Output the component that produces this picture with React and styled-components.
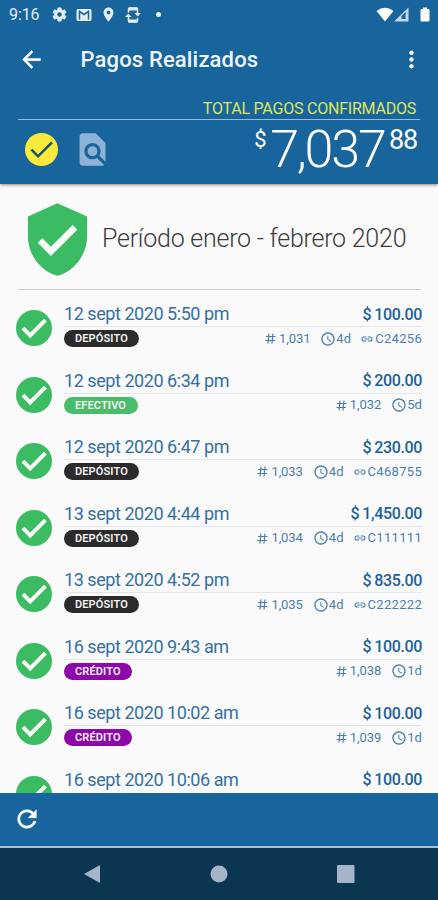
import React from "react";
import styled, { createGlobalStyle } from "styled-components";

const Global = createGlobalStyle`
  * { box-sizing: border-box; }
  body { margin: 0; background: #fafafa; font-family: Roboto, "Noto Sans", sans-serif; }
`;

const Screen = styled.div`
  width: 438px;
  height: 900px;
  display: flex;
  flex-direction: column;
  overflow: hidden;
  background: #fafafa;
`;
const Header = styled.header`
  height: 184px;
  flex: none;
  display: flex;
  flex-direction: column;
  background: #17659c;
  box-shadow: 0 1px 3px rgba(0, 0, 0, 0.45);
  color: #fff;
  z-index: 1;
`;
const StatusBar = styled.div`
  height: 29px;
  display: flex;
  align-items: center;
  padding: 0 8px 0 9px;
  color: #e3edf8;
`;
const Time = styled.span`
  width: 42px;
  font-size: 16px;
  line-height: 28px;
  letter-spacing: -0.1px;
`;
const StatusIcons = styled.div`
  display: flex;
  align-items: center;
  gap: 7px;
  flex: 1;
`;
const Dot = styled.i`
  width: 5px;
  height: 5px;
  margin-left: 7px;
  border-radius: 50%;
  background: #eef5fc;
`;
const Signals = styled.div`
  display: flex;
  align-items: center;
  color: #fff;
`;
const Toolbar = styled.div`
  height: 60px;
  display: flex;
  align-items: center;
  padding: 0 13px 0 18px;
`;
const Title = styled.h1`
  flex: 1;
  margin: 0 0 0 35.5px;
  font-size: 22px;
  line-height: 30px;
  padding-top: 2px;
  font-weight: 500;
  letter-spacing: 0.15px;
  color: #eff5fc;
`;
const Summary = styled.section`
  margin: 0 18px;
`;
const SummaryLabel = styled.div`
  height: 31px;
  padding: 10px 4px 0 0;
  border-bottom: 1.5px solid #9dbad4;
  font-size: 16px;
  line-height: 19px;
  letter-spacing: -0.22px;
  text-align: right;
  color: #dfe75a;
`;
const SummaryRow = styled.div`
  display: flex;
  justify-content: space-between;
  align-items: flex-start;
  padding: 10px 3px 0 7px;
`;
const Actions = styled.div`
  display: flex;
  align-items: center;
  gap: 15px;
`;
const Total = styled.div`
  display: flex;
  align-items: flex-start;
  line-height: 1;
`;
const Small = styled.span`
  font-size: ${(p) => p.$size}px;
  line-height: ${(p) => p.$line}px;
  margin-left: ${(p) => p.$gap || 0}px;
  letter-spacing: ${(p) => p.$track || 0}px;
`;
const Whole = styled.span`
  margin-left: 3.5px;
  font-size: 52px;
  line-height: 39px;
  font-weight: 300;
  letter-spacing: -2.2px;
`;
const Content = styled.main`
  flex: 1;
  min-height: 0;
  overflow: hidden;
`;
const Period = styled.div`
  height: 106px;
  margin: 0 17px 0 18px;
  padding-top: 5px;
  display: flex;
  align-items: center;
  border-bottom: 1.5px solid #cfcfcf;
  font-size: 25px;
  font-weight: 300;
  color: #3c3c3c;
`;
const PeriodText = styled.span`
  margin-left: 5px;
  white-space: nowrap;
  line-height: 30px;
  letter-spacing: -0.24px;
`;
const List = styled.ul`
  margin: 0;
  padding: 12px 16px 0;
  list-style: none;
`;
const Row = styled.li`
  height: 66.57px;
  display: flex;
`;
const RowIcon = styled.div`
  width: 48px;
  padding-top: 8px;
  flex: none;
`;
const RowBody = styled.div`
  flex: 1;
`;
const Line = styled.div`
  display: flex;
  justify-content: space-between;
  align-items: center;
`;
const TopLine = styled(Line)`
  height: 25px;
  border-bottom: 1px solid ${(p) => (p.$last ? "transparent" : "#e4e6e8")};
`;
const BottomLine = styled(Line)`
  height: 23px;
`;
const DateText = styled.span`
  font-size: 18px;
  line-height: 24px;
  letter-spacing: -0.45px;
  color: #3570a5;
`;
const Amount = styled.span`
  display: flex;
  gap: 3px;
  font-size: 16px;
  line-height: 23px;
  font-weight: 500;
  letter-spacing: -0.35px;
  color: #1b629c;
`;
const tones = { DEPÓSITO: "#2b2b2b", EFECTIVO: "#49bd69", CRÉDITO: "#8c08a8" };
const Badge = styled.span`
  height: 17px;
  padding: 0 11.5px 0 11px;
  border-radius: 9px;
  background: ${(p) => tones[p.$kind]};
  font-size: 11px;
  line-height: 17px;
  font-weight: 600;
  letter-spacing: 0.12px;
  color: #f4f4f4;
`;
const Details = styled.div`
  display: flex;
  align-items: center;
  gap: 10px;
  font-size: 13px;
  color: #4a7fb0;
`;
const Detail = styled.span`
  display: flex;
  align-items: center;
  gap: ${(p) => p.$gap || 0}px;
  line-height: 16px;
  letter-spacing: ${(p) => p.$track || 0}px;
`;
const BottomBar = styled.footer`
  height: 55px;
  flex: none;
  display: flex;
  align-items: center;
  padding: 0 0 2px 13px;
  background: #17659c;
  border-bottom: 2px solid #b3bdc5;
  color: #fff;
`;
const NavBar = styled.nav`
  height: 52px;
  flex: none;
  display: flex;
  align-items: center;
  justify-content: space-between;
  padding: 0 82px 0 83px;
  background: #0a3652;
  color: #a3b5c6;
`;
const Svg = styled.svg`
  display: block;
  flex: none;
  fill: currentColor;
`;

const paths = {
  back: "M20 11H7.83l5.59-5.59L12 4l-8 8 8 8 1.41-1.41L7.83 13H20v-2z",
  more: "M12 8c1.1 0 2-.9 2-2s-.9-2-2-2-2 .9-2 2 .9 2 2 2zm0 2c-1.1 0-2 .9-2 2s.9 2 2 2 2-.9 2-2-.9-2-2-2zm0 6c-1.1 0-2 .9-2 2s.9 2 2 2 2-.9 2-2-.9-2-2-2z",
  gear: "M19.14 12.94c.04-.3.06-.61.06-.94 0-.32-.02-.64-.07-.94l2.03-1.58c.18-.14.23-.41.12-.61l-1.92-3.32c-.12-.22-.37-.29-.59-.22l-2.39.96c-.5-.38-1.03-.7-1.62-.94L14.4 2.81c-.04-.24-.24-.41-.48-.41h-3.84c-.24 0-.43.17-.47.41L9.25 5.35c-.59.24-1.13.57-1.62.94l-2.39-.96c-.22-.08-.47 0-.59.22L2.74 8.87c-.12.21-.08.47.12.61l2.03 1.58c-.05.3-.09.63-.09.94s.02.64.07.94l-2.03 1.58c-.18.14-.23.41-.12.61l1.92 3.32c.12.22.37.29.59.22l2.39-.96c.5.38 1.03.7 1.62.94l.36 2.54c.05.24.24.41.48.41h3.84c.24 0 .44-.17.47-.41l.36-2.54c.59-.24 1.13-.56 1.62-.94l2.39.96c.22.08.47 0 .59-.22l1.92-3.32c.12-.22.07-.47-.12-.61l-2.01-1.58zM12 15.6c-1.98 0-3.6-1.62-3.6-3.6s1.62-3.6 3.6-3.6 3.6 1.62 3.6 3.6-1.62 3.6-3.6 3.6z",
  mail: "M20 4H4c-1.1 0-2 .9-2 2v12c0 1.1.9 2 2 2h16c1.1 0 2-.9 2-2V6c0-1.1-.9-2-2-2zm-1 14h-2V9.2l-5 3.5-5-3.5V18H5V6h1.2L12 10l5.8-4H19z",
  place: "M12 2C8.13 2 5 5.13 5 9c0 5.25 7 13 7 13s7-7.75 7-13c0-3.87-3.13-7-7-7zm0 9.5c-1.38 0-2.5-1.12-2.5-2.5s1.12-2.5 2.5-2.5 2.5 1.12 2.5 2.5-1.12 2.5-2.5 2.5z",
  find: "M20 19.59V8l-6-6H6c-1.1 0-1.99.9-1.99 2L4 20c0 1.1.89 2 1.99 2H18c.45 0 .85-.15 1.19-.4l-4.43-4.43c-.8.52-1.74.83-2.76.83-2.76 0-5-2.24-5-5s2.24-5 5-5 5 2.24 5 5c0 1.02-.31 1.96-.83 2.75L20 19.59zM9 13c0 1.66 1.34 3 3 3s3-1.34 3-3-1.34-3-3-3-3 1.34-3 3z",
  shield: "M12 1L3 5v6c0 5.55 3.84 10.74 9 12 5.16-1.26 9-6.45 9-12V5l-9-4zm-2 16l-4-4 1.41-1.41L10 14.17l6.59-6.59L18 9l-8 8z",
  clock: "M11.99 2C6.47 2 2 6.48 2 12s4.47 10 9.99 10C17.52 22 22 17.52 22 12S17.52 2 11.99 2zM12 20c-4.42 0-8-3.58-8-8s3.58-8 8-8 8 3.58 8 8-3.58 8-8 8zm.5-13H11v6l5.25 3.15.75-1.23-4.5-2.67z",
  refresh: "M17.65 6.35C16.2 4.9 14.21 4 12 4c-4.42 0-7.99 3.58-7.99 8s3.57 8 7.99 8c3.73 0 6.84-2.55 7.73-6h-2.08c-.82 2.33-3.04 4-5.65 4-3.31 0-6-2.69-6-6s2.69-6 6-6c1.66 0 3.14.69 4.22 1.78L13 11h7V4l-2.35 2.35z",
};

const Icon = ({ name, size, color, weight = 0 }) => (
  <Svg width={size} height={size} viewBox="0 0 24 24" color={color}>
    <path d={paths[name]} stroke="currentColor" strokeWidth={weight} />
  </Svg>
);

const CheckCircle = ({ size, fill, stroke, width }) => (
  <Svg width={size} height={size} viewBox="0 0 36 36">
    <circle cx="18" cy="18" r="18" fill={fill} />
    <path d="M7 18.2L14.2 25.4L29.4 10.2" fill="none" stroke={stroke} strokeWidth={width} />
  </Svg>
);

const Hash = () => (
  <Svg width="11" height="11" viewBox="0 0 11 11">
    <path d="M4 .5L3 10.5M8 .5L7 10.5M1 3.5H10.5M.5 7.5H10" fill="none" stroke="currentColor" strokeWidth="1.2" />
  </Svg>
);

const Chain = () => (
  <Svg width="12" height="8" viewBox="0 0 12 8">
    <path d="M5.2 2H3a2 2 0 0 0 0 4H5.2M6.8 2H9a2 2 0 0 1 0 4H6.8M3.5 4H8.5" fill="none" stroke="currentColor" strokeWidth="1.1" />
  </Svg>
);

const PhoneSync = () => (
  <Svg width="18" height="18" viewBox="0 0 18 18">
    <path d="M4.5 6.500V3.500Q4.500 2 6 2h6Q13.500 2 13.500 3.500V7M4.500 11v3.500Q4.500 16 6 16h6q1.500 0 1.500-1.500V12" fill="none" stroke="currentColor" strokeWidth="1.6" />
    <path d="M10.500 7h6.500L13.700 10.500zM1 11h6.500L4.300 7.500zM4.500 1.500h9v3h-9zM4.500 13.500h9v3h-9z" />
  </Svg>
);

const payments = [
  ["12 sept 2020 5:50 pm", "100.00", "DEPÓSITO", "1,031", "4d", "C24256"],
  ["12 sept 2020 6:34 pm", "200.00", "EFECTIVO", "1,032", "5d"],
  ["12 sept 2020 6:47 pm", "230.00", "DEPÓSITO", "1,033", "4d", "C468755"],
  ["13 sept 2020 4:44 pm", "1,450.00", "DEPÓSITO", "1,034", "4d", "C111111"],
  ["13 sept 2020 4:52 pm", "835.00", "DEPÓSITO", "1,035", "4d", "C222222"],
  ["16 sept 2020 9:43 am", "100.00", "CRÉDITO", "1,038", "1d"],
  ["16 sept 2020 10:02 am", "100.00", "CRÉDITO", "1,039", "1d"],
  ["16 sept 2020 10:06 am", "100.00"],
];

const Payment = ({ data: [date, amount, kind, number, age, reference] }) => (
  <Row>
    <RowIcon>
      <CheckCircle size={36} fill="#3cbc62" stroke="#fafafa" width={4} />
    </RowIcon>
    <RowBody>
      <TopLine $last={!kind}>
        <DateText>{date}</DateText>
        <Amount><span>$</span><span>{amount}</span></Amount>
      </TopLine>
      {kind && (
        <BottomLine>
          <Badge $kind={kind}>{kind}</Badge>
          <Details>
            <Detail $gap={3} $track={-0.1}><Hash />{number}</Detail>
            <Detail $track={0.1}><Icon name="clock" size={16} />{age}</Detail>
            {reference && <Detail $gap={2} $track={0.3}><Chain />{reference}</Detail>}
          </Details>
        </BottomLine>
      )}
    </RowBody>
  </Row>
);

export default function App() {
  return (
    <Screen>
      <Global />
      <Header>
        <StatusBar>
          <Time>9:16</Time>
          <StatusIcons>
            <Icon name="gear" size={17} weight={0.8} />
            <Icon name="mail" size={18} />
            <Icon name="place" size={17} />
            <PhoneSync />
            <Dot />
          </StatusIcons>
          <Signals>
            <Svg width="44" height="16" viewBox="0 0 44 16">
              <path d="M.5 4Q9-2.500 17.500 4L9 14.500Z" />
              <path d="M18 14.500L32.500 .5V14.500Z" fill="#c4d8ec" />
              <path d="M25.500 12V9l4-4v7z" fill="#17659c" />
            </Svg>
            <Svg width="10" height="16" viewBox="0 0 10 16">
              <path d="M3 .5h4V2h1.500Q9.500 2 9.500 3v10.500q0 1-1 1h-7q-1 0-1-1V3q0-1 1-1H3z" />
            </Svg>
          </Signals>
        </StatusBar>
        <Toolbar>
          <Icon name="back" size={27} weight={0.4} />
          <Title>Pagos Realizados</Title>
          <Icon name="more" size={27} />
        </Toolbar>
        <Summary>
          <SummaryLabel>TOTAL PAGOS CONFIRMADOS</SummaryLabel>
          <SummaryRow>
            <Actions>
              <CheckCircle size={33} fill="#fcea3b" stroke="#17506f" width={2.8} />
              <Icon name="find" size={39} color="#8eb2d5" />
            </Actions>
            <Total>
              <Small $size={22} $line={20}>$</Small>
              <Whole>7,037</Whole>
              <Small $size={27} $line={21} $gap={4.5} $track={-1.2}>88</Small>
            </Total>
          </SummaryRow>
        </Summary>
      </Header>
      <Content>
        <Period>
          <Icon name="shield" size={79} color="#3cbc62" />
          <PeriodText>Período enero - febrero 2020</PeriodText>
        </Period>
        <List>
          {payments.map((p) => <Payment key={p[0]} data={p} />)}
        </List>
      </Content>
      <BottomBar>
        <Icon name="refresh" size={28} weight={0.4} />
      </BottomBar>
      <NavBar>
        <Svg width="18" height="20" viewBox="0 0 18 20"><path d="M1 10L17 1V19Z" /></Svg>
        <Svg width="18" height="18" viewBox="0 0 18 18"><circle cx="9" cy="9" r="8.5" /></Svg>
        <Svg width="20" height="20" viewBox="0 0 20 20"><rect x="1" y="1" width="17.5" height="18" rx="1" /></Svg>
      </NavBar>
    </Screen>
  );
}
